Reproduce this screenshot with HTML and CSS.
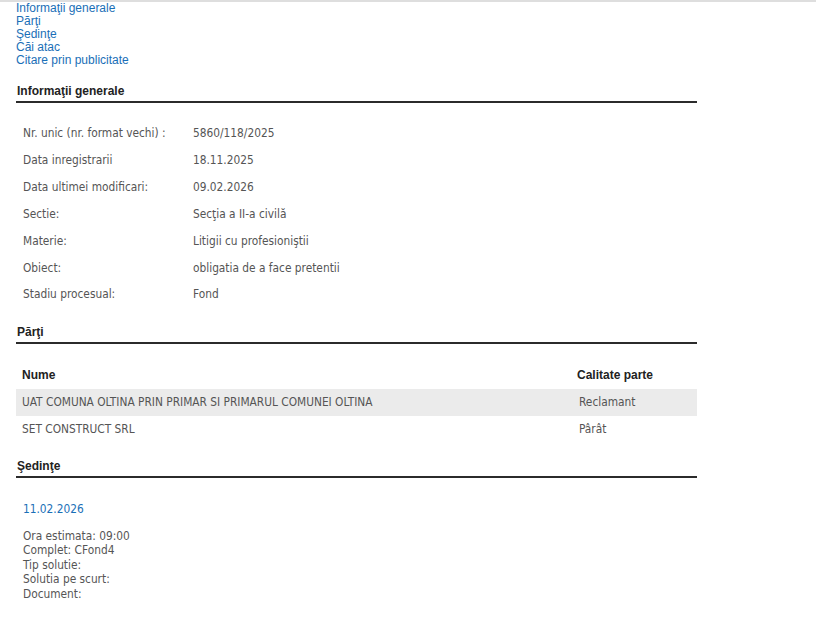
FILE: index.html
```html
<!DOCTYPE html>
<html lang="ro">
<head>
<meta charset="utf-8">
<title>Dosar</title>
<link rel="stylesheet" href="styles.css">
</head>
<body>
<div class="page">
  <nav class="links">
    <a href="#">Informaţii generale</a>
    <a href="#">Părţi</a>
    <a href="#">Şedinţe</a>
    <a href="#">Căi atac</a>
    <a href="#">Citare prin publicitate</a>
  </nav>

  <h2 class="section-title first">Informaţii generale</h2>
  <div class="info">
    <div class="info-row"><span class="cell">Nr. unic (nr. format vechi) :</span><span class="cell">5860/118/2025</span></div>
    <div class="info-row"><span class="cell">Data inregistrarii</span><span class="cell">18.11.2025</span></div>
    <div class="info-row"><span class="cell">Data ultimei modificari:</span><span class="cell">09.02.2026</span></div>
    <div class="info-row"><span class="cell">Sectie:</span><span class="cell">Secţia a II-a civilă</span></div>
    <div class="info-row"><span class="cell">Materie:</span><span class="cell">Litigii cu profesioniştii</span></div>
    <div class="info-row"><span class="cell">Obiect:</span><span class="cell">obligatia de a face pretentii</span></div>
    <div class="info-row"><span class="cell">Stadiu procesual:</span><span class="cell">Fond</span></div>
  </div>

  <h2 class="section-title">Părţi</h2>
  <div class="parties">
    <div class="p-row head"><span class="cell">Nume</span><span class="cell">Calitate parte</span></div>
    <div class="p-row alt"><span class="cell">UAT COMUNA OLTINA PRIN PRIMAR SI PRIMARUL COMUNEI OLTINA</span><span class="cell val">Reclamant</span></div>
    <div class="p-row"><span class="cell">SET CONSTRUCT SRL</span><span class="cell val">Pârât</span></div>
  </div>

  <h2 class="section-title">Şedinţe</h2>
  <div class="hearing">
    <div class="h-date">11.02.2026</div>
    <div class="h-details">
      <div>Ora estimata: 09:00</div>
      <div>Complet: CFond4</div>
      <div>Tip solutie:</div>
      <div>Solutia pe scurt:</div>
      <div>Document:</div>
    </div>
  </div>
</div>
</body>
</html>
```
FILE: styles.css
```css
html, body {
  margin: 0;
  padding: 0;
  background: #fff;
}
body {
  border-top: 2px solid #dedede;
  font-family: "Liberation Sans", Arial, sans-serif;
}
.page {
  padding-left: 16px;
  width: 681px;
}
.links {
  display: flex;
  flex-direction: column;
  align-items: flex-start;
}
.links a {
  font-size: 12px;
  line-height: 13px;
  color: #1a6fb7;
  text-decoration: none;
}
.section-title {
  margin: 16px 0 0;
  font-size: 12px;
  line-height: 16px;
  font-weight: bold;
  color: #222;
  padding: 0 0 2px 1px;
  border-bottom: 2px solid #2b2b2b;
}
.section-title.first {
  margin-top: 16px;
}
.parties + .section-title {
  margin-top: 15px;
}
.info,
.parties,
.hearing {
  font-family: "DejaVu Sans Condensed", "DejaVu Sans", sans-serif;
  font-size: 11.8px;
  color: #555;
}
.info {
  margin-top: 17px;
}
.info-row {
  display: grid;
  grid-template-columns: 170px 1fr;
  height: 26.85px;
  align-items: center;
}
.cell {
  padding-left: 7px;
}
.parties {
  margin-top: 18px;
}
.p-row {
  display: grid;
  grid-template-columns: 555px 1fr;
  height: 27px;
  align-items: center;
}
.p-row .cell {
  padding-left: 6px;
}
.p-row .cell.val {
  padding-left: 8px;
}
.p-row.head {
  font-family: "Liberation Sans", Arial, sans-serif;
  font-size: 12px;
  font-weight: bold;
  color: #222;
}
.p-row.alt {
  background: #ebebeb;
}
.hearing {
  padding-left: 7px;
}
.h-date {
  margin-top: 24px;
  color: #1a6fb7;
  line-height: 14px;
}
.h-details {
  margin-top: 13px;
  line-height: 14.5px;
}
```
